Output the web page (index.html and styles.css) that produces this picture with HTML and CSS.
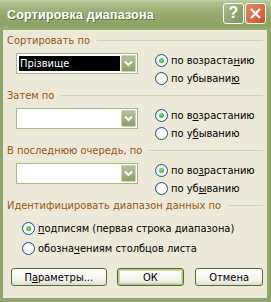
FILE: index.html
```html
<!DOCTYPE html>
<html lang="ru">
<head>
  <meta charset="UTF-8">
  <title>Сортировка диапазона</title>
  <link rel="stylesheet" href="styles.css">
</head>
<body>
  <div class="window">
    <div class="titlebar">
      <span class="title">Сортировка диапазона</span>
      <div class="caption-buttons">
        <span class="cap-btn help">?</span>
        <span class="cap-btn close">
          <svg width="13" height="13" viewBox="0 0 13 13"><path d="M2 2 L11 11 M11 2 L2 11" stroke="#fff" stroke-width="2.2" fill="none"/></svg>
        </span>
      </div>
    </div>

    <div class="dialog">
      <div class="section">
        <div class="heading"><span>Сортировать по</span><i></i></div>
        <div class="row">
          <div class="combo">
            <span class="value selected">Прізвище</span>
            <span class="drop"><svg width="9" height="7" viewBox="0 0 9 7"><path d="M1 1.5 L4.5 5 L8 1.5" stroke="#fff" stroke-width="2" fill="none"/></svg></span>
          </div>
          <div class="radios">
            <label class="radio"><span class="dot checked"></span>по возраста<u>н</u>ию</label>
            <label class="radio"><span class="dot"></span>по убывани<u>ю</u></label>
          </div>
        </div>
      </div>

      <div class="section">
        <div class="heading"><span>Затем по</span><i></i></div>
        <div class="row">
          <div class="combo">
            <span class="value"></span>
            <span class="drop"><svg width="9" height="7" viewBox="0 0 9 7"><path d="M1 1.5 L4.5 5 L8 1.5" stroke="#fff" stroke-width="2" fill="none"/></svg></span>
          </div>
          <div class="radios">
            <label class="radio"><span class="dot checked"></span>по в<u>о</u>зрастанию</label>
            <label class="radio"><span class="dot"></span>по у<u>б</u>ыванию</label>
          </div>
        </div>
      </div>

      <div class="section">
        <div class="heading"><span>В последнюю очередь, по</span><i></i></div>
        <div class="row">
          <div class="combo">
            <span class="value"></span>
            <span class="drop"><svg width="9" height="7" viewBox="0 0 9 7"><path d="M1 1.5 L4.5 5 L8 1.5" stroke="#fff" stroke-width="2" fill="none"/></svg></span>
          </div>
          <div class="radios">
            <label class="radio"><span class="dot checked"></span>по во<u>з</u>растанию</label>
            <label class="radio"><span class="dot"></span>по уб<u>ы</u>ванию</label>
          </div>
        </div>
      </div>

      <div class="section last">
        <div class="heading"><span>Идентифицировать диапазон данных по</span><i></i></div>
        <div class="options">
          <label class="radio"><span class="dot checked"></span><u>п</u>одписям (первая строка диапазона)</label>
          <label class="radio"><span class="dot"></span>обозна<u>ч</u>ениям столбцов листа</label>
        </div>
      </div>

      <div class="buttons">
        <button class="btn params">П<u>а</u>раметры...</button>
        <button class="btn ok default">ОК</button>
        <button class="btn cancel">Отмена</button>
      </div>
    </div>
  </div>
</body>
</html>
```

FILE: styles.css
```css
body {
  margin: 0;
  font-family: "DejaVu Sans Condensed", "DejaVu Sans", sans-serif;
  font-size: 11px;
  background: #ece9d8;
}

.window {
  width: 271px;
  height: 302px;
  box-sizing: border-box;
  background: #91a46b;
  padding: 0 4px 4px 3px;
  display: flex;
  flex-direction: column;
}

.titlebar {
  height: 30px;
  margin: 0 -4px 0 -3px;
  padding: 0 5px 0 7px;
  display: flex;
  align-items: center;
  justify-content: space-between;
  background: linear-gradient(#c6d2a8 0, #b2c291 2px, #a2b47e 8px, #94a86c 16px, #8ea366 24px, #9aae75 30px);
}

.title {
  color: #fff;
  font-family: "Liberation Sans", Arial, sans-serif;
  font-weight: bold;
  font-size: 12.5px;
  letter-spacing: 0.2px;
  text-shadow: 1px 1px 0 #5f7040;
  margin-top: -1px;
}

.caption-buttons {
  display: flex;
  gap: 1px;
  margin-top: -4px;
}

.cap-btn {
  width: 19px;
  height: 19px;
  border: 1px solid #fff;
  border-radius: 3px;
  display: flex;
  align-items: center;
  justify-content: center;
  color: #fff;
  font-family: "Liberation Sans", Arial, sans-serif;
  font-weight: bold;
  font-size: 16px;
}

.help {
  background: linear-gradient(135deg, #aebf8b, #7d915a);
}

.close {
  background: linear-gradient(135deg, #e5896a, #c9542b);
}

.dialog {
  flex: 1;
  background: #ece9d8;
  padding: 3px 4px 0 4px;
  display: flex;
  flex-direction: column;
}

.section {
  height: 55px;
}

.heading {
  height: 14px;
  display: flex;
  align-items: center;
  color: #9a5612;
}

.heading i {
  flex: 1;
  height: 1px;
  background: #d0d0bf;
  margin-left: 7px;
}

.row {
  display: flex;
  margin-top: 4px;
}

.combo {
  width: 117px;
  height: 19px;
  margin: 2px 0 0 9px;
  border: 1px solid #a6b884;
  background: #fff;
  display: flex;
  align-items: center;
  padding: 0 1px 0 2px;
}

.value {
  flex: 1;
  height: 15px;
  line-height: 15px;
  padding-left: 1px;
  margin-right: 1px;
}

.selected {
  background: #000;
  color: #fff;
}

.drop {
  width: 15px;
  height: 17px;
  box-sizing: border-box;
  border: 1px solid #cdd6b8;
  border-radius: 1px;
  background: linear-gradient(#b2c097, #8e9f6c);
  display: flex;
  align-items: center;
  justify-content: center;
}

.radios {
  margin-left: 17px;
}

.radio {
  display: flex;
  align-items: center;
  height: 18px;
  color: #000;
}

.dot {
  width: 11px;
  height: 11px;
  border: 1px solid #1c5180;
  border-radius: 50%;
  background: radial-gradient(circle at 60% 60%, #fff 40%, #dcdcd2 100%);
  margin-right: 3px;
  position: relative;
}

.dot.checked::after {
  content: "";
  position: absolute;
  left: 3px;
  top: 3px;
  width: 5px;
  height: 5px;
  border-radius: 50%;
  background: radial-gradient(circle at 40% 40%, #7fe07f, #21a121);
}

.options {
  margin: 6px 0 0 15px;
}

.options .radio {
  height: 20px;
}

.buttons {
  display: flex;
  margin: 15px 0 0 4px;
  gap: 10px;
}

.btn {
  height: 18px;
  padding: 0;
  border: 1px solid #546b2e;
  border-radius: 3px;
  background: linear-gradient(#fff, #f3f2ea 70%, #dedcce);
  font-family: inherit;
  font-size: 11px;
  color: #000;
}

.params {
  width: 96px;
}

.ok {
  width: 68px;
  box-shadow: inset 0 0 0 1px #b5c78e, inset 0 0 0 2px #cfdbad;
}

.cancel {
  width: 68px;
  margin-left: 1px;
}
```
